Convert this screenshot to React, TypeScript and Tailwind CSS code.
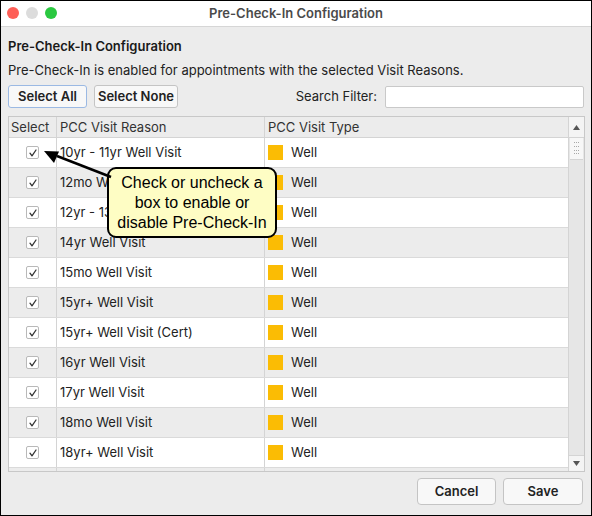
import React from "react";

const rows = [
  "10yr - 11yr Well Visit",
  "12mo Well Visit",
  "12yr - 13yr Well Visit",
  "14yr Well Visit",
  "15mo Well Visit",
  "15yr+ Well Visit",
  "15yr+ Well Visit (Cert)",
  "16yr Well Visit",
  "17yr Well Visit",
  "18mo Well Visit",
  "18yr+ Well Visit",
];

const CheckBox = () => (
  <span className="w-[13px] h-[13px] border border-[#b9b9b9] bg-white rounded-[2px] flex items-center justify-center">
    <svg className="w-[10px] h-[10px]" viewBox="0 0 10 10" fill="none" stroke="#333" strokeWidth={1.3}>
      <path d="M2 5.2l2 2.6L8 2" strokeLinecap="round" strokeLinejoin="round" />
    </svg>
  </span>
);

const App: React.FC = () => {
  return (
    <div
      className="relative w-[592px] h-[516px] bg-[#ececec] border border-black overflow-hidden text-[13px] text-[#222]"
      style={{ fontFamily: "Inter, 'Noto Sans', sans-serif" }}
    >
      {/* Title bar */}
      <div className="relative h-[26px] bg-white border-b border-[#d6d6d6] flex items-center justify-center">
        <div className="absolute left-[6px] top-[6px] flex gap-[7px]">
          <span className="w-[12px] h-[12px] rounded-full bg-[#fe5f57]" />
          <span className="w-[12px] h-[12px] rounded-full bg-[#dcdcdc]" />
          <span className="w-[12px] h-[12px] rounded-full bg-[#2ac840]" />
        </div>
        <span className="font-semibold text-[#4a4a4a]">Pre-Check-In Configuration</span>
      </div>

      <div className="px-[7px] flex flex-col">
        <div className="mt-[11px] h-[16px] leading-[16px] font-semibold text-[#1a1a1a]">Pre-Check-In Configuration</div>
        <div className="mt-[8px] h-[16px] leading-[16px]">
          Pre-Check-In is enabled for appointments with the selected Visit Reasons.
        </div>

        {/* Toolbar */}
        <div className="mt-[7px] h-[23px] flex items-center">
          <button className="h-[23px] w-[79px] bg-[#f8f8f8] border border-[#9bb9e3] rounded-[3px] font-semibold text-[#222]">
            Select All
          </button>
          <button className="ml-[7px] h-[23px] w-[84px] bg-[#f8f8f8] border border-[#c4c4c4] rounded-[3px] font-semibold text-[#222]">
            Select None
          </button>
          <span className="ml-auto mr-[8px]">Search Filter:</span>
          <div className="h-[22px] w-[199px] bg-white border border-[#c9c9c9] rounded-[2px]" />
        </div>

        {/* Table */}
        <div className="mt-[8px] h-[356px] w-[577px] border border-[#c8c8c8] flex bg-white">
          <div className="flex-1 flex flex-col overflow-hidden">
            <div className="h-[21px] flex bg-[#ececec] border-b border-[#d4d4d4] text-[#333]">
              <div className="w-[48px] pl-[2px] border-r border-[#d4d4d4] leading-[20px]">Select</div>
              <div className="w-[208px] pl-[3px] border-r border-[#d4d4d4] leading-[20px]">PCC Visit Reason</div>
              <div className="flex-1 pl-[3px] leading-[20px]">PCC Visit Type</div>
            </div>
            {rows.map((r, i) => (
              <div
                key={r}
                className={`h-[30px] shrink-0 flex border-b border-[#dadada] ${i % 2 === 0 ? "bg-white" : "bg-[#ececec]"}`}
              >
                <div className="w-[48px] border-r border-[#d4d4d4] flex items-center justify-center">
                  <CheckBox />
                </div>
                <div className="w-[208px] pl-[3px] border-r border-[#d4d4d4] flex items-center">{r}</div>
                <div className="flex-1 pl-[3px] flex items-center gap-[8px]">
                  <span className="w-[15px] h-[15px] bg-[#fbbc04]" />
                  <span>Well</span>
                </div>
              </div>
            ))}
            <div className="flex-1 flex bg-[#ececec]">
              <div className="w-[48px] border-r border-[#d4d4d4]" />
              <div className="w-[208px] border-r border-[#d4d4d4]" />
            </div>
          </div>
          {/* Scrollbar */}
          <div className="w-[16px] border-l border-[#d4d4d4] bg-[#e6e6e6] flex flex-col">
            <div className="h-[21px] bg-[#f4f4f4] flex items-center justify-center border-b border-[#d4d4d4]">
              <svg width="7" height="5" viewBox="0 0 7 5"><path d="M0 5L3.5 0L7 5z" fill="#555" /></svg>
            </div>
            <div className="h-[22px] mx-[1px] bg-[#f7f7f7] border-b border-[#d4d4d4] grid grid-cols-3 gap-y-[2px] px-[3px] py-[4px]">
              {Array.from({ length: 12 }).map((_, k) => (
                <span key={k} className="w-[1px] h-[1px] bg-[#a8a8a8] justify-self-center" />
              ))}
            </div>
            <div className="flex-1" />
            <div className="h-[16px] bg-[#f4f4f4] flex items-center justify-center border-t border-[#d4d4d4]">
              <svg width="7" height="5" viewBox="0 0 7 5"><path d="M0 0L3.5 5L7 0z" fill="#555" /></svg>
            </div>
          </div>
        </div>

        {/* Footer */}
        <div className="mt-[6px] h-[27px] flex justify-end gap-[7px] pr-[1px]">
          <button className="w-[79px] h-[27px] bg-[#f8f8f8] border border-[#c4c4c4] rounded-[4px] font-semibold text-[#222]">
            Cancel
          </button>
          <button className="w-[80px] h-[27px] bg-[#f8f8f8] border border-[#c4c4c4] rounded-[4px] font-semibold text-[#222]">
            Save
          </button>
        </div>
      </div>

      {/* Callout */}
      <div
        className="absolute left-[106px] top-[166px] w-[170px] h-[71px] bg-[#fefdc4] border-2 border-black rounded-[9px] flex flex-col items-center justify-center text-[16px] leading-[20px] text-black"
        style={{ fontFamily: "'Liberation Sans', Arial, sans-serif" }}
      >
        <span>Check or uncheck a</span>
        <span>box to enable or</span>
        <span>disable Pre-Check-In</span>
      </div>
      <svg className="absolute left-0 top-0 pointer-events-none" width="592" height="516">
        <line x1="56" y1="155" x2="110" y2="176" stroke="black" strokeWidth="2.5" />
        <polygon points="43,150 58,150.5 53,162" fill="black" />
      </svg>
    </div>
  );
};

export default App;
